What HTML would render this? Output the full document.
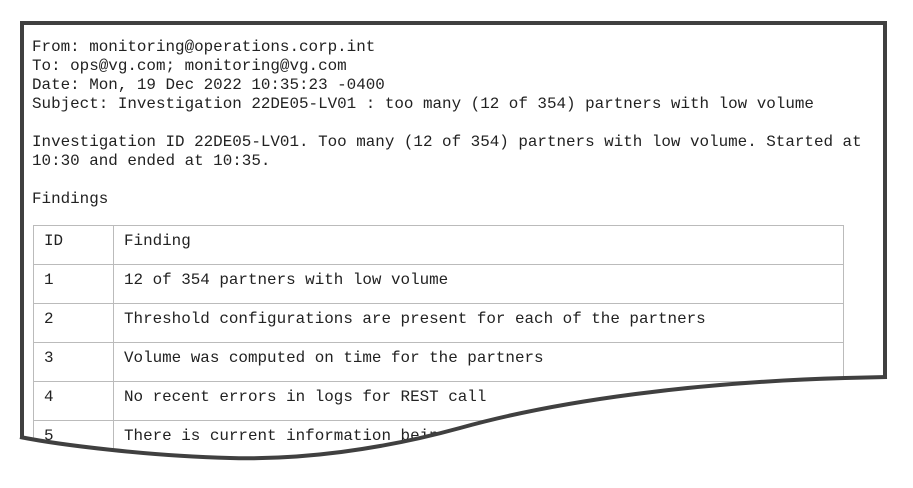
<!DOCTYPE html>
<html><head><meta charset="utf-8"><style>
body{margin:0;width:913px;height:488px;background:#fff;position:relative;overflow:hidden;font-family:"Liberation Mono","Courier New",monospace;color:#222}
.frame{position:absolute;left:20px;top:21px;width:859px;height:440px;border:4px solid #404040;border-bottom:none;box-sizing:content-box}
.t{position:absolute;left:32px;top:38px;font-size:15.9px;line-height:19px;white-space:pre;letter-spacing:0}
table{position:absolute;left:33px;top:225px;border-collapse:collapse;font-size:15.9px;width:811px}
td{border:1px solid #bbb;height:39px;padding:0 0 0 10px;vertical-align:top;padding-top:6px;box-sizing:border-box}
td:first-child{width:80px}
</style></head><body>
<div class="frame"></div>
<div class="t">From: monitoring@operations.corp.int
To: ops@vg.com; monitoring@vg.com
Date: Mon, 19 Dec 2022 10:35:23 -0400
Subject: Investigation 22DE05-LV01 : too many (12 of 354) partners with low volume

Investigation ID 22DE05-LV01. Too many (12 of 354) partners with low volume. Started at
10:30 and ended at 10:35.

Findings</div>
<table>
<tr><td>ID</td><td>Finding</td></tr>
<tr><td>1</td><td>12 of 354 partners with low volume</td></tr>
<tr><td>2</td><td>Threshold configurations are present for each of the partners</td></tr>
<tr><td>3</td><td>Volume was computed on time for the partners</td></tr>
<tr><td>4</td><td>No recent errors in logs for REST call</td></tr>
<tr><td>5</td><td>There is current information being</td></tr>
</table>
<svg width="913" height="488" style="position:absolute;left:0;top:0">
<path d="M883,377 L845,378 C700,382 560,400 460,428 C380,450 300,460 230,458 C150,456 60,445 20,437 L0,437 L0,488 L913,488 L913,377 Z" fill="#fff"/>
<path d="M887,377 L845,378 C700,382 560,400 460,428 C380,450 300,460 230,458 C150,456 60,445 20,437" fill="none" stroke="#404040" stroke-width="4"/>
</svg>
</body></html>
